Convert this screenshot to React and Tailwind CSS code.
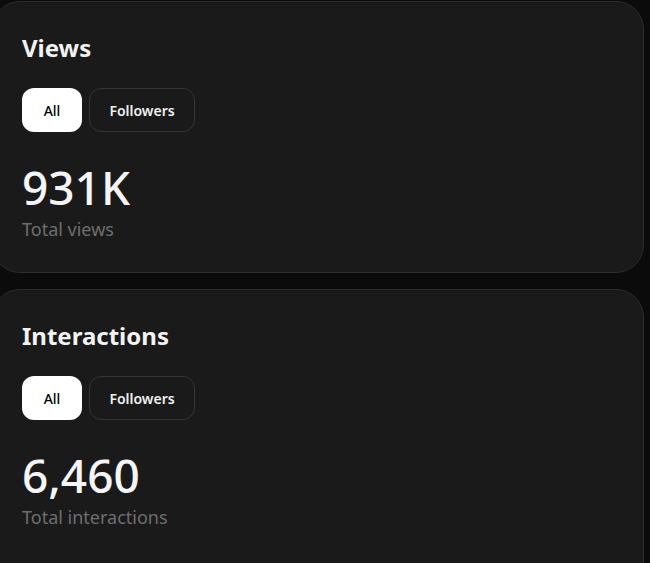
export default function App() {
  const cards = [
    { title: "Views", value: "931K", label: "Total views", pb: "pb-[29px]" },
    { title: "Interactions", value: "6,460", label: "Total interactions", pb: "pb-[80px]" },
  ];
  return (
    <div
      className="h-[563px] overflow-hidden bg-[#0b0b0b] pt-px"
      style={{ fontFamily: '"Noto Sans", "Open Sans", sans-serif' }}
    >
      <div className="-ml-[8px] flex w-[652px] flex-col gap-4">
        {cards.map((c) => (
          <div
            key={c.title}
            className={`rounded-[28px] border border-[#2c2c2c] bg-[#1a1a1a] pl-[29px] pt-[30px] ${c.pb}`}
          >
            <h2 className="text-[24px] font-bold leading-8 text-[#f2f2f2]">{c.title}</h2>
            <div className="mt-[24px] flex gap-[7px]">
              <button className="h-[44px] w-[60px] rounded-xl bg-white text-[14px] font-medium text-black">
                All
              </button>
              <button className="h-[44px] w-[106px] rounded-xl border border-[#363636] bg-[#1a1a1a] text-[14px] font-semibold text-[#f0f0f0]">
                Followers
              </button>
            </div>
            <div className="mt-8 text-[46px] font-medium leading-[46px] text-[#f5f5f7]">{c.value}</div>
            <div className="mt-[5px] text-[18px] leading-7 text-[#6e6e6e]">{c.label}</div>
          </div>
        ))}
      </div>
    </div>
  );
}
